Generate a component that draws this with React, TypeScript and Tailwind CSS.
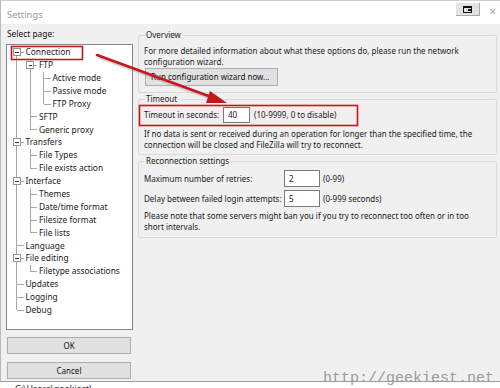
import React from "react";

type Node = { label: string; level: number; open?: boolean; last?: boolean; first?: boolean; trail: boolean[] };

// trail[i] = true when the ancestor at level i still has siblings below (draw a vertical line)
const TREE: Node[] = [
  { label: "Connection", level: 0, open: true, first: true, trail: [] },
  { label: "FTP", level: 1, open: true, trail: [true] },
  { label: "Active mode", level: 2, trail: [true, true] },
  { label: "Passive mode", level: 2, trail: [true, true] },
  { label: "FTP Proxy", level: 2, last: true, trail: [true, true] },
  { label: "SFTP", level: 1, trail: [true] },
  { label: "Generic proxy", level: 1, last: true, trail: [true] },
  { label: "Transfers", level: 0, open: true, trail: [] },
  { label: "File Types", level: 1, trail: [true] },
  { label: "File exists action", level: 1, last: true, trail: [true] },
  { label: "Interface", level: 0, open: true, trail: [] },
  { label: "Themes", level: 1, trail: [true] },
  { label: "Date/time format", level: 1, trail: [true] },
  { label: "Filesize format", level: 1, trail: [true] },
  { label: "File lists", level: 1, last: true, trail: [true] },
  { label: "Language", level: 0, trail: [] },
  { label: "File editing", level: 0, open: true, trail: [] },
  { label: "Filetype associations", level: 1, last: true, trail: [true] },
  { label: "Updates", level: 0, trail: [] },
  { label: "Logging", level: 0, trail: [] },
  { label: "Debug", level: 0, last: true, trail: [] },
];

const IND = 13.5;
const RH = 12.9;

function Branch({ n }: { n: Node }) {
  const w = (n.level + 1) * IND;
  const cx = n.level * IND + IND / 2;
  const cy = RH / 2;
  return (
    <svg width={w} height={RH} className="shrink-0" shapeRendering="crispEdges">
      {n.trail.map((on, i) =>
        on ? <line key={i} x1={i * IND + IND / 2} y1={0} x2={i * IND + IND / 2} y2={RH} stroke="#a8a8a8" /> : null
      )}
      {!n.first && <line x1={cx} y1={0} x2={cx} y2={cy} stroke="#a8a8a8" />}
      {!n.last && <line x1={cx} y1={cy} x2={cx} y2={RH} stroke="#a8a8a8" />}
      <line x1={cx} y1={cy} x2={w} y2={cy} stroke="#a8a8a8" />
      {n.open && (
        <g>
          <rect x={cx - 3.5} y={cy - 3.5} width={7} height={7} fill="#fff" stroke="#959595" />
          <line x1={cx - 1.5} y1={cy} x2={cx + 2} y2={cy} stroke="#333" />
        </g>
      )}
    </svg>
  );
}

function Btn({ children, className = "" }: { children: React.ReactNode; className?: string }) {
  return (
    <div className={`flex items-center justify-center whitespace-nowrap bg-[#e1e1e1] border border-[#adadad] text-[#111] ${className}`}>
      {children}
    </div>
  );
}

function Field({ value, w }: { value: string; w: string }) {
  return (
    <div className={`${w} h-full shrink-0 bg-white border border-[#7a7a7a] flex items-center pl-[4px] text-[#111]`}>{value}</div>
  );
}

export default function App() {
  return (
    <div className="relative w-[500px] h-[388px] overflow-hidden bg-white font-['Noto_Sans',sans-serif] text-[8px] text-[#1a1a1a]">
      <div className="flex flex-col h-[382px] border-l border-[#b9b9b9] border-b border-b-[#9c9c9c]">
        {/* title bar */}
        <div className="h-[24px] shrink-0 flex items-start bg-white border-t border-[#d0d0d0]">
          <span className="pl-[6px] pt-[7px] text-[9.4px] text-[#9a9a9a]">Settings</span>
          <div className="ml-auto mt-[2px] w-[24px] h-[13px] bg-[#e3e3e3] border-r border-b border-[#a9a9a9] flex items-center justify-center">
            <div className="w-[9px] h-[7px] border border-[#111] border-t-[2px] relative">
              <div className="absolute right-[-1px] top-[1px] w-[4px] h-[2px] bg-[#111]" />
            </div>
          </div>
          <span className="ml-[9px] mr-[4px] mt-[5px] text-[12px] leading-[12px] text-[#aaaaaa]">×</span>
        </div>

        {/* body */}
        <div className="flex-1 flex bg-[#f0f0f0] whitespace-nowrap">
          {/* left column */}
          <div className="w-[132px] shrink-0 pl-[5px] flex flex-col">
            <div className="h-[20px] leading-[20px] pl-[1px] text-[8.4px] text-[#111]">Select page:</div>
            <div className="w-[127px] h-[286px] bg-white border border-[#828790] pt-[1px] pl-[3px]">
              {TREE.map((n) => (
                <div key={n.label} className="flex items-center h-[12.9px] text-[8.4px]">
                  <Branch n={n} />
                  <span className="ml-[2px] leading-none">{n.label}</span>
                </div>
              ))}
            </div>
            <Btn className="mt-[7px] ml-[1px] w-[124px] h-[17px]">OK</Btn>
            <Btn className="mt-[8px] ml-[1px] w-[124px] h-[17px]">Cancel</Btn>
          </div>

          {/* right column */}
          <div className="w-[364px] pl-[5px] pt-[5px] flex flex-col">
            <fieldset className="h-[64px] border border-[#d9d9d9] rounded-[2px] px-[5px]">
              <legend className="ml-[1px] px-[1px] leading-[12px]">Overview</legend>
              <div className="pt-[4px] leading-[11px]">
                For more detailed information about what these options do, please run the network
                <br />
                configuration wizard.
              </div>
              <Btn className="mt-[1px] ml-[1px] w-[133px] h-[18px] justify-start pl-[5px]">Run configuration wizard now...</Btn>
            </fieldset>

            <fieldset className="h-[62px] border border-[#d9d9d9] rounded-[2px] px-[5px]">
              <legend className="ml-[1px] px-[1px] leading-[12px]">Timeout</legend>
              <div className="mt-[2px] h-[16px] flex items-center">
                <span className="w-[79px] shrink-0">Timeout in seconds:</span>
                <Field value="40" w="w-[27px]" />
                <span className="ml-[4px]">(10-9999, 0 to disable)</span>
              </div>
              <div className="mt-[5px] leading-[11px]">
                If no data is sent or received during an operation for longer than the specified time, the
                <br />
                connection will be closed and FileZilla will try to reconnect.
              </div>
            </fieldset>

            <fieldset className="h-[83px] border border-[#d9d9d9] rounded-[2px] px-[5px]">
              <legend className="ml-[1px] px-[1px] leading-[12px]">Reconnection settings</legend>
              <div className="mt-[3px] h-[17px] flex items-center">
                <span className="w-[140px] shrink-0">Maximum number of retries:</span>
                <Field value="2" w="w-[36px]" />
                <span className="ml-[3px]">(0-99)</span>
              </div>
              <div className="mt-[3px] h-[17px] flex items-center">
                <span className="w-[140px] shrink-0">Delay between failed login attempts:</span>
                <Field value="5" w="w-[36px]" />
                <span className="ml-[3px]">(0-999 seconds)</span>
              </div>
              <div className="mt-[3px] leading-[11px]">
                Please note that some servers might ban you if you try to reconnect too often or in too
                <br />
                short intervals.
              </div>
            </fieldset>
          </div>
        </div>
      </div>

      {/* cut-off line below the window */}
      <div className="h-[6px] overflow-hidden pl-[15px]">
        <div className="mt-[2px] text-[9px] leading-[10px] text-[#333]">C:\Users\geekiest\...</div>
      </div>

      {/* annotations */}
      <svg className="absolute left-0 top-0 pointer-events-none" width={500} height={388}>
        <rect x={11.5} y={46.5} width={71} height={13} fill="none" stroke="#c8161d" strokeWidth={1.6} />
        <rect x={139.5} y={105.5} width={218} height={20} fill="none" stroke="#c8161d" strokeWidth={1.6} />
        <line x1={98} y1={56} x2={215} y2={99} stroke="#8a8a8a" strokeOpacity={0.35} strokeWidth={2.5} transform="translate(1 1.5)" />
        <line x1={97} y1={55} x2={214} y2={98} stroke="#c8161d" strokeWidth={2.6} strokeLinecap="round" />
        <polygon points="227,103 210,91 206,103" fill="#c8161d" />
      </svg>

      <div className="absolute right-[6px] bottom-[1px] font-['Liberation_Mono',monospace] text-[15px] leading-[16px] text-[#9b9b9b]">
        http://geekiest.net
      </div>
    </div>
  );
}
